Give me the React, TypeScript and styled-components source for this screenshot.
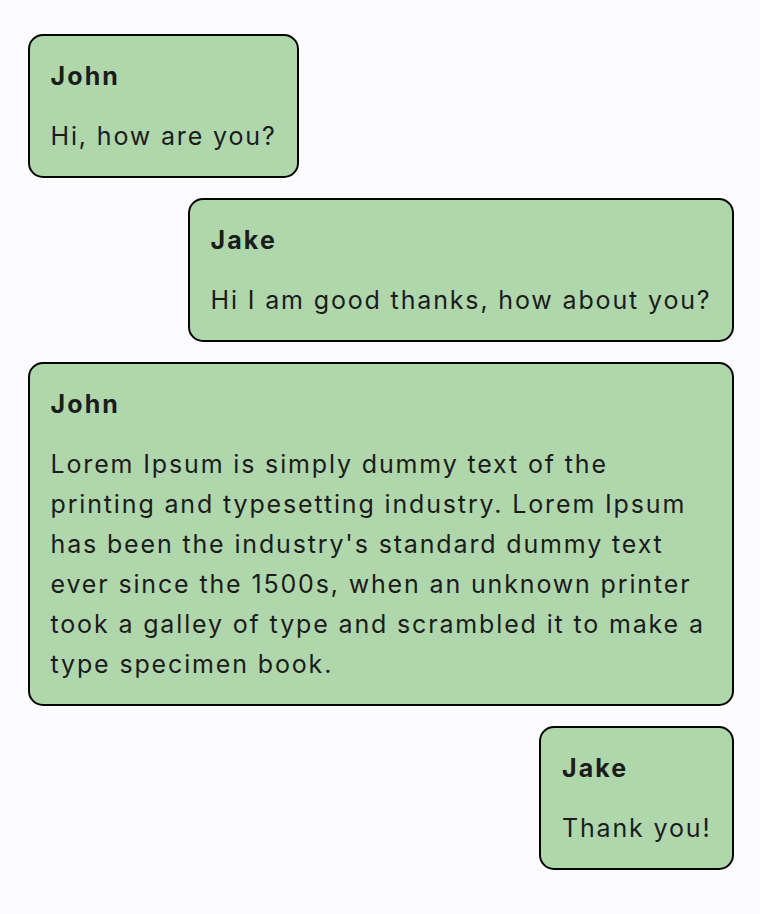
import React from "react";
import styled, { createGlobalStyle } from "styled-components";

const Global = createGlobalStyle`
  html, body { margin: 0; padding: 0; background: #fcfcfe; }
  body { font-family: Inter, "Noto Sans", sans-serif; color: #1c1c1c; }
`;

const Thread = styled.div`
  display: flex;
  flex-direction: column;
  gap: 20px;
  padding: 34px 26px 40px 28px;
`;

const Bubble = styled.div<{ $mine: boolean }>`
  align-self: ${(p) => (p.$mine ? "flex-end" : "flex-start")};
  background: #b0d7ac;
  border: 2px solid #050505;
  border-radius: 15px;
  padding: 19.5px 20.5px 20.5px;
  box-sizing: border-box;
  max-width: 100%;
`;

const Name = styled.div`
  font-size: 25px;
  font-weight: 700;
  line-height: 40px;
  margin-bottom: 20px;
  letter-spacing: 2.1px;
`;

const Text = styled.div`
  font-size: 25px;
  line-height: 40px;
  letter-spacing: 1.85px;
`;

const messages = [
  { name: "John", mine: false, text: "Hi, how are you?" },
  { name: "Jake", mine: true, text: "Hi I am good thanks, how about you?" },
  {
    name: "John",
    mine: false,
    text:
      "Lorem Ipsum is simply dummy text of the printing and typesetting industry. Lorem Ipsum has been the industry's standard dummy text ever since the 1500s, when an unknown printer took a galley of type and scrambled it to make a type specimen book.",
  },
  { name: "Jake", mine: true, text: "Thank you!" },
];

export default function App() {
  return (
    <>
      <Global />
      <Thread>
        {messages.map((m, i) => (
          <Bubble key={i} $mine={m.mine}>
            <Name>{m.name}</Name>
            <Text>{m.text}</Text>
          </Bubble>
        ))}
      </Thread>
    </>
  );
}
